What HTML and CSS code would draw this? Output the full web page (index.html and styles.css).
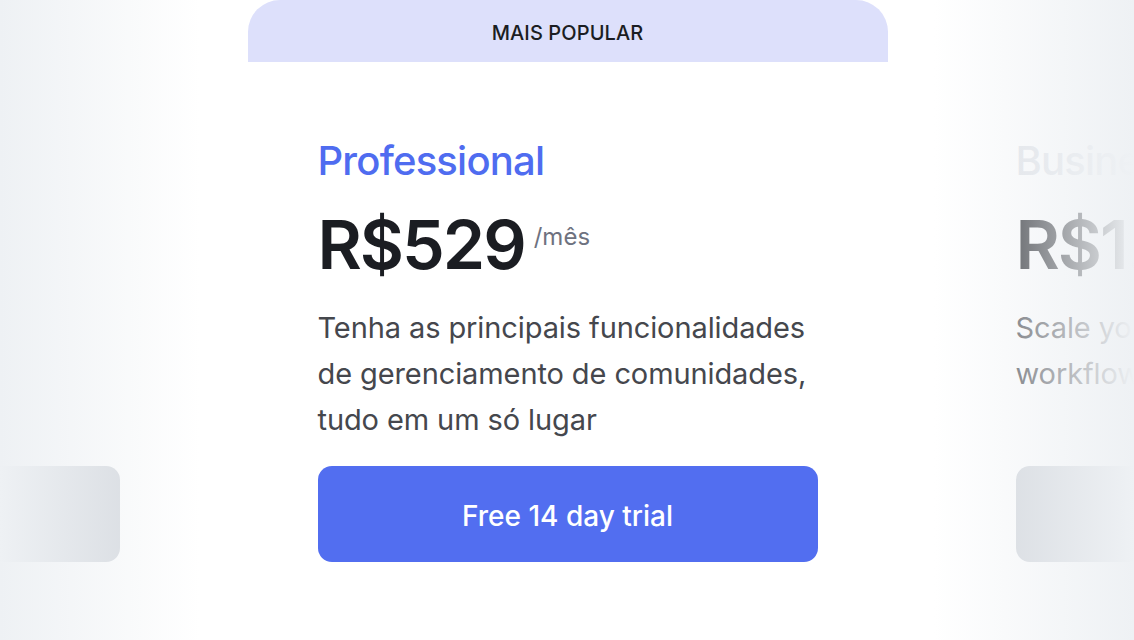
FILE: index.html
```html
<!DOCTYPE html>
<html lang="pt-BR">
<head>
<meta charset="utf-8">
<title>Planos</title>
<link rel="stylesheet" href="styles.css">
</head>
<body>
<main class="stage">
  <section class="card card--side" aria-hidden="true">
    <div class="ghost ghost--title"></div>
    <div class="ghost ghost--price"></div>
    <div class="ghost ghost--desc"></div>
    <div class="cta cta--muted"></div>
  </section>

  <section class="card card--featured">
    <div class="badge">MAIS POPULAR</div>
    <div class="card-body">
      <h2 class="plan-name">Professional</h2>
      <div class="price-row">
        <span class="price">R$529</span>
        <span class="period">/mês</span>
      </div>
      <p class="desc">Tenha as principais funcionalidades de gerenciamento de comunidades, tudo em um só lugar</p>
      <a class="cta" href="#">Free 14 day trial</a>
    </div>
  </section>

  <section class="card card--side">
    <h2 class="plan-name plan-name--muted">Business</h2>
    <div class="price-row">
      <span class="price">R$1.299</span>
      <span class="period">/mês</span>
    </div>
    <p class="desc">Scale your community management workflows</p>
    <a class="cta cta--muted" href="#">Contact sales</a>
  </section>

  <div class="fade fade--left"></div>
  <div class="fade fade--right"></div>
</main>
</body>
</html>
```

FILE: styles.css
```css
* { box-sizing: border-box; }

html, body {
  margin: 0;
  padding: 0;
  background: #ffffff;
  font-family: Inter, "Noto Sans", "Liberation Sans", sans-serif;
  overflow: hidden;
}

.stage {
  position: relative;
  width: 1134px;
  height: 640px;
  display: flex;
  justify-content: center;
  gap: 58px;
  padding-left: 1px;
  overflow: hidden;
}

.card {
  flex: 0 0 640px;
  width: 640px;
  background: #ffffff;
}

.card--side {
  padding: 137px 70px 0;
}

.card-body {
  padding: 75px 70px 0;
}

.badge {
  height: 62px;
  padding-top: 3px;
  background: #dde0fb;
  border-radius: 32px 32px 0 0;
  display: flex;
  align-items: center;
  justify-content: center;
  font-size: 20px;
  font-weight: 500;
  letter-spacing: 0.1px;
  color: #1b1d22;
}

.plan-name {
  margin: 0;
  font-size: 40px;
  line-height: 48px;
  font-weight: 500;
  letter-spacing: -0.8px;
  color: #4f6cf0;
}

.plan-name--muted {
  color: #dfe2e7;
}

.price-row {
  display: flex;
  align-items: flex-start;
  margin-top: 25px;
}

.price {
  font-size: 68px;
  line-height: 68px;
  font-weight: 600;
  letter-spacing: -2px;
  color: #1b1d22;
}

.period {
  margin-top: 13px;
  margin-left: 9px;
  font-size: 24px;
  line-height: 28px;
  color: #6e7280;
}

.desc {
  margin: 27px 0 0;
  min-height: 138px;
  font-size: 29px;
  line-height: 46px;
  letter-spacing: -0.1px;
  color: #45474d;
  max-width: 515px;
}

.cta {
  margin-top: 23px;
  display: flex;
  align-items: center;
  justify-content: center;
  width: 500px;
  height: 96px;
  padding-top: 3px;
  border-radius: 14px;
  background: #526ef0;
  color: #ffffff;
  text-decoration: none;
  font-size: 28px;
  font-weight: 500;
}

.cta--muted {
  background: #d1d5db;
  color: #d1d5db;
}

.ghost {
  height: 48px;
}

.ghost--price {
  height: 68px;
  margin-top: 25px;
}

.ghost--desc {
  height: 138px;
  margin-top: 27px;
}

.fade {
  position: absolute;
  top: 0;
  bottom: 0;
  width: 200px;
  pointer-events: none;
}

.fade--left {
  left: 0;
  background: linear-gradient(to right, rgba(238, 241, 244, 1) 0%, rgba(238, 241, 244, 0) 100%);
}

.fade--right {
  right: 0;
  background: linear-gradient(to left, rgba(238, 241, 244, 1) 0%, rgba(238, 241, 244, 0) 100%);
}
```
